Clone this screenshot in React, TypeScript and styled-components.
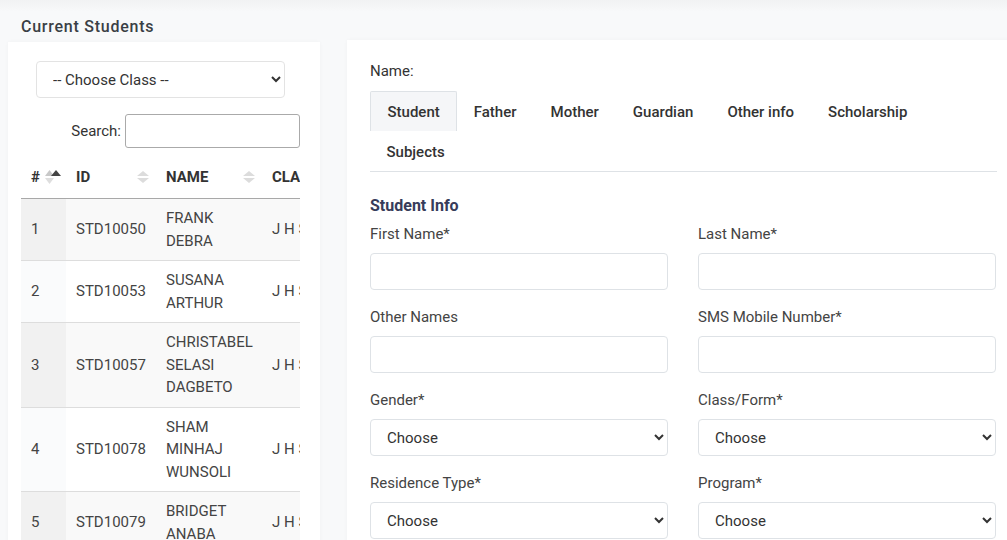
import React from "react";
import styled, { createGlobalStyle } from "styled-components";

const GlobalStyle = createGlobalStyle`
  html, body {
    margin: 0;
    padding: 0;
    background: #f8f9fa;
    font-family: "Roboto", "Liberation Sans", sans-serif;
    color: #333;
    overflow: hidden;
  }
  * { box-sizing: border-box; }
`;

const TopShade = styled.div`
  height: 12px;
  background: linear-gradient(#f1f2f3, #f8f9fa);
`;

const Page = styled.div`
  display: grid;
  grid-template-columns: 312px 680px;
  column-gap: 27px;
  padding-left: 8px;
  width: 1040px;
`;

const LeftCol = styled.div`
  display: flex;
  flex-direction: column;
`;

const Heading = styled.h3`
  margin: 5px 0 5px 13px;
  font-size: 16px;
  font-weight: 500;
  line-height: 20px;
  color: #3a3f45;
  letter-spacing: 0.75px;
`;

const Card = styled.div<{ $pad: string }>`
  background: #fff;
  box-shadow: 0 0 4px rgba(0, 0, 0, 0.035);
  padding: ${(p) => p.$pad};
  height: 560px;
`;

const ClassSelect = styled.select`
  display: block;
  margin-left: 15px;
  width: 249px;
  height: 37px;
  padding: 0 12px;
  font-family: inherit;
  font-size: 15px;
  color: #333;
  background: #fff;
  border: 1px solid #e3e3e3;
  border-radius: 4px;
`;

const SearchRow = styled.label`
  display: flex;
  justify-content: flex-end;
  align-items: center;
  gap: 4px;
  width: 279px;
  margin-top: 16px;
  font-size: 15px;
  color: #333;
`;

const SearchInput = styled.input`
  width: 175px;
  height: 34px;
  border: 1px solid #aaa;
  border-radius: 3px;
`;

const TableWrap = styled.div`
  width: 279px;
  overflow: hidden;
  margin-top: 12px;
`;

const Table = styled.table`
  table-layout: fixed;
  width: 340px;
  border-collapse: collapse;
  font-size: 15px;
`;

const Th = styled.th<{ $w: number }>`
  width: ${(p) => p.$w}px;
  text-align: left;
  font-weight: 700;
  padding: 8px 10px 12px;
  border-bottom: 1px solid #a8a8a8;
  position: relative;
  color: #333;
  line-height: 18px;
  white-space: nowrap;
`;

const SortIcon = styled.svg`
  position: absolute;
  right: 3px;
  top: 9px;
`;

const Tr = styled.tr<{ $odd: boolean }>`
  background: ${(p) => (p.$odd ? "#f9f9f9" : "#fff")};
  border-bottom: 1px solid #ddd;
`;

const Td = styled.td<{ $sorted?: boolean; $odd?: boolean }>`
  padding: 8px 10px;
  line-height: 22.5px;
  color: #444;
  vertical-align: middle;
  background: ${(p) => (p.$sorted ? (p.$odd ? "#f1f1f1" : "#fafbfc") : "transparent")};
`;

const ClassCell = styled(Td)`
  white-space: nowrap;
`;

const NameLabel = styled.div`
  font-size: 15px;
  color: #333;
  margin-bottom: 11px;
`;

const Tabs = styled.ul`
  list-style: none;
  margin: 0;
  padding: 0;
  display: flex;
  flex-wrap: wrap;
  width: 627px;
  border-bottom: 1px solid #dee2e6;
`;

const Tab = styled.li<{ $active?: boolean }>`
  padding: 0 16.5px;
  height: 40px;
  line-height: 40px;
  font-size: 15px;
  font-weight: 500;
  color: #333;
  border: 1px solid ${(p) => (p.$active ? "#dee2e6" : "transparent")};
  border-bottom: none;
  border-radius: 2px 2px 0 0;
  background: ${(p) => (p.$active ? "#f5f6f8" : "transparent")};
  margin-left: ${(p) => (p.$active ? "0" : "-1px")};
`;

const SectionTitle = styled.h4`
  margin: 24px 0 8px;
  font-size: 16px;
  font-weight: 700;
  line-height: 20px;
  color: #373c5a;
`;

const FormGrid = styled.div`
  display: grid;
  grid-template-columns: 298px 298px;
  column-gap: 30px;
  row-gap: 17px;
`;

const Field = styled.div`
  display: flex;
  flex-direction: column;
`;

const Label = styled.label`
  font-size: 15px;
  line-height: 20px;
  color: #444;
  margin-bottom: 9px;
`;

const TextInput = styled.input`
  height: 37px;
  border: 1px solid #dee2e6;
  border-radius: 4px;
  background: #fff;
`;

const Select = styled.select`
  height: 37px;
  border: 1px solid #dee2e6;
  border-radius: 4px;
  background: #fff;
  padding: 0 12px;
  font-family: inherit;
  font-size: 15px;
  color: #333;
`;

const Sort = ({ active }: { active?: boolean }) =>
  active ? (
    <SortIcon width="18" height="18" viewBox="0 0 18 18">
      <polygon points="0,7 4.5,1 9,7" fill="#c8c8c8" />
      <polygon points="0,9 4.5,15 9,9" fill="#dedede" />
      <polygon points="6,7 11,1 16,7" fill="#444" />
    </SortIcon>
  ) : (
    <SortIcon width="18" height="18" viewBox="0 0 18 18">
      <polygon points="2,7 8,2 14,7" fill="#dcdcdc" />
      <polygon points="2,9 8,14 14,9" fill="#dcdcdc" />
    </SortIcon>
  );

const students = [
  { id: "STD10050", name: "FRANK DEBRA" },
  { id: "STD10053", name: "SUSANA ARTHUR" },
  { id: "STD10057", name: "CHRISTABEL SELASI DAGBETO" },
  { id: "STD10078", name: "SHAM MINHAJ WUNSOLI" },
  { id: "STD10079", name: "BRIDGET ANABA" },
];

const tabs = ["Student", "Father", "Mother", "Guardian", "Other info", "Scholarship", "Subjects"];

const fields: { label: string; kind: "text" | "select" }[] = [
  { label: "First Name*", kind: "text" },
  { label: "Last Name*", kind: "text" },
  { label: "Other Names", kind: "text" },
  { label: "SMS Mobile Number*", kind: "text" },
  { label: "Gender*", kind: "select" },
  { label: "Class/Form*", kind: "select" },
  { label: "Residence Type*", kind: "select" },
  { label: "Program*", kind: "select" },
];

export default function App() {
  return (
    <>
      <GlobalStyle />
      <TopShade />
      <Page>
        <LeftCol>
          <Heading>Current Students</Heading>
          <Card $pad="19px 0 0 13px">
            <ClassSelect defaultValue="">
              <option value="">-- Choose Class --</option>
            </ClassSelect>
            <SearchRow>
              Search: <SearchInput type="search" />
            </SearchRow>
            <TableWrap>
              <Table>
                <thead>
                  <tr>
                    <Th $w={45}>#<Sort active /></Th>
                    <Th $w={90}>ID<Sort /></Th>
                    <Th $w={106}>NAME<Sort /></Th>
                    <Th $w={99}>CLASS<Sort /></Th>
                  </tr>
                </thead>
                <tbody>
                  {students.map((s, i) => (
                    <Tr key={s.id} $odd={i % 2 === 0}>
                      <Td $sorted $odd={i % 2 === 0}>{i + 1}</Td>
                      <Td>{s.id}</Td>
                      <Td>{s.name}</Td>
                      <ClassCell>J H S 1</ClassCell>
                    </Tr>
                  ))}
                </tbody>
              </Table>
            </TableWrap>
          </Card>
        </LeftCol>
        <Card $pad="22px 23px 0 23px" style={{ marginTop: 28 }}>
          <NameLabel>Name:</NameLabel>
          <Tabs>
            {tabs.map((t, i) => (
              <Tab key={t} $active={i === 0}>{t}</Tab>
            ))}
          </Tabs>
          <SectionTitle>Student Info</SectionTitle>
          <FormGrid>
            {fields.map((f) => (
              <Field key={f.label}>
                <Label>{f.label}</Label>
                {f.kind === "text" ? (
                  <TextInput type="text" />
                ) : (
                  <Select defaultValue="">
                    <option value="">Choose</option>
                  </Select>
                )}
              </Field>
            ))}
          </FormGrid>
        </Card>
      </Page>
    </>
  );
}
